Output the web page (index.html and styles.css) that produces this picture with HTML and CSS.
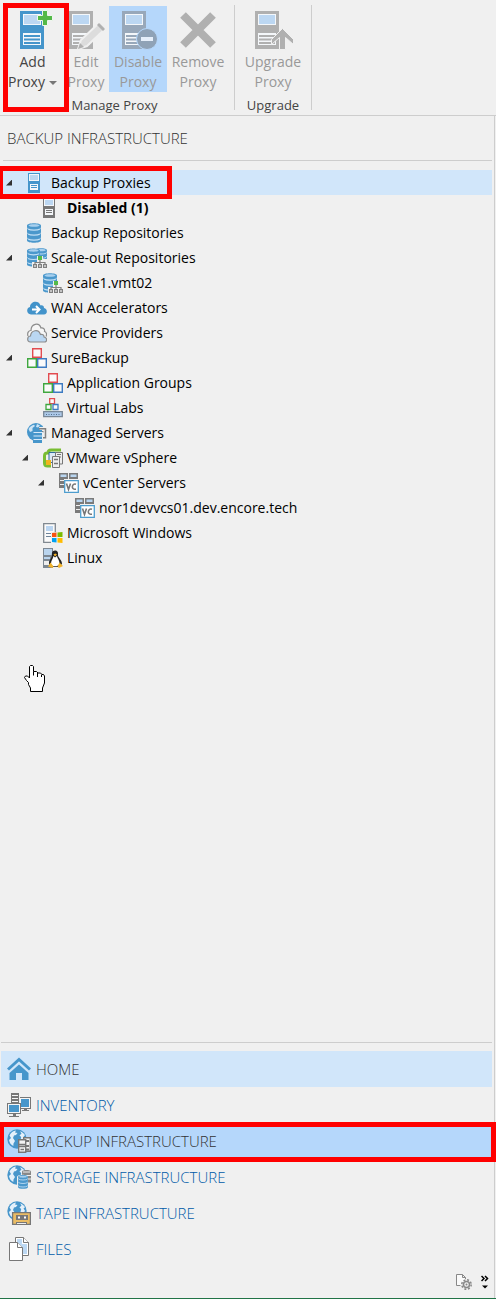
FILE: index.html
```html
<!DOCTYPE html>
<html lang="en">
<head>
<meta charset="utf-8">
<meta name="viewport" content="width=device-width, initial-scale=1">
<title>Backup Infrastructure</title>
<link rel="stylesheet" href="styles.css">
</head>
<body>
<svg class="sprite" aria-hidden="true">
  <symbol id="server-large" viewBox="0 0 24 38">
    <path fill="currentColor" d="M0 0h24v38H0z"/>
    <path class="paper" d="M3 3h18v11H3z"/><path class="screen" d="M4 4h16v9H4z"/>
    <path class="paper" d="M3 22h18v12H3z"/>
    <path stroke="currentColor" stroke-width="2" d="M4 25h16M4 28.500h16M4 32h16"/>
  </symbol>
  <symbol id="server" viewBox="0 0 12 20">
    <path fill="currentColor" d="M0 0h12v20H0z"/>
    <path class="paper" d="M1 1h10v7H1z"/><path class="screen" d="M2 2h8v5H2z"/>
    <path class="paper" d="M2 11h8v6H2z"/>
    <path stroke="currentColor" d="M3 12.500h6M3 14.500h6"/>
  </symbol>
  <symbol id="disks" viewBox="0 0 14 20">
    <path fill="#4b98cc" d="M0 2.500C0-.6 14-.6 14 2.500v2l-.7.700.7.700V9.500l-.7.700.7.700v3.600l-.7.700.7.700v1.600c0 3-14 3-14 0v-1.600l.7-.7-.7-.7v-3.600l.7-.7-.7-.7V5.900l.7-.7-.7-.7z"/>
    <path fill="#a9d0ee" d="M1.500 2.500c0-1.700 11-1.700 11 0s-11 1.700-11 0z"/>
    <path fill="none" stroke="#c3e0f5" stroke-width="1.200" d="M1 6c2.500 1.500 9.500 1.500 12 0M1 11c2.500 1.500 9.500 1.500 12 0M1 16c2.500 1.500 9.500 1.500 12 0"/>
  </symbol>
  <symbol id="nodes" viewBox="0 0 14 12">
    <path fill="none" stroke="#808080" stroke-width="1.200" d="M7 3v5M2 9V6.500h10V9"/>
    <path fill="#54b948" d="M5 0h4v4H5z"/>
    <g fill="#f0f0f0" stroke="#808080" stroke-width="1.200"><path d="M.6 8.600h2.800v2.800H.6zM5.600 8.600h2.800v2.800H5.600zM10.600 8.600h2.800v2.800h-2.800z"/></g>
  </symbol>
  <symbol id="repo" viewBox="0 0 20 20"><use href="#disks" width="14" height="20"/></symbol>
  <symbol id="scaleout" viewBox="0 0 20 20">
    <use href="#disks" x="8" width="12" height="17"/><use href="#disks" width="13" height="19"/>
    <path fill="#f0f0f0" d="M10 8h6v3h4v9H5v-6h5z"/><use href="#nodes" x="6" y="8" width="14" height="12"/>
  </symbol>
  <symbol id="extent" viewBox="0 0 20 20">
    <use href="#disks" width="14" height="20"/>
    <path fill="#f0f0f0" d="M10 8h6v3h4v9H5v-6h5z"/><use href="#nodes" x="6" y="8" width="14" height="12"/>
  </symbol>
  <symbol id="wan" viewBox="0 0 20 20">
    <path fill="#4293ca" d="M4 16.500C-.5 16.500-1.300 10 3 9c0-5.500 8.500-7.500 10.500-1.600 2.500-.4 3.500.8 3.500 2.600 3.800.6 3.800 6.500 0 6.500z"/>
    <path fill="none" stroke="#fff" stroke-width="2" d="M5 11.500h7M9 8l3.500 3.500L9 15"/>
  </symbol>
  <symbol id="providers" viewBox="0 0 20 20">
    <path fill="#f6f6f6" stroke="#8c8c8c" stroke-width="1.200" d="M1 13c-1-3 .5-5.500 3-5.500C4 .5 12-1 14 5c2.500-.3 4 1 3.500 3.500 2 .5 2.500 3 1.500 5"/>
    <path fill="#bad7f2" stroke="#8c8c8c" stroke-width="1.200" d="M3.500 19C-.5 19 0 13 3.500 13c.5-6 8-7.500 10-1.500 2-.6 3.600.5 3.600 2.500 3.400.6 3.200 5 .4 5z"/>
  </symbol>
  <symbol id="cubes" viewBox="0 0 20 20">
    <g fill="#fafafa" stroke-width="1.400"><path stroke="#e24c50" d="M5.700.7h8.600v8.600H5.700z"/><path stroke="#3fa73f" d="M.7 10.700h8.600v8.600H.7z"/><path stroke="#3d7bc2" d="M10.700 10.700h8.600v8.600h-8.600z"/></g>
  </symbol>
  <symbol id="labs" viewBox="0 0 20 20">
    <g fill="#fafafa" stroke-width="1.300"><path stroke="#e24c50" d="M6.700.7h4.800v5H6.700z"/><path stroke="#3fa73f" d="M3 6.500h5v5H3z"/><path stroke="#3d7bc2" d="M10 6.500h5v5h-5z"/></g>
    <path fill="#adc9e8" stroke="#788796" stroke-width="1.300" d="M.7 13.700h18.600v5H.7z"/><path stroke="#536f8c" stroke-dasharray="1 1.500" d="M3 16.500h14"/>
  </symbol>
  <symbol id="globe" viewBox="0 0 20 20">
    <circle cx="10" cy="10" r="9.700" fill="#4796cb"/>
    <path fill="#e4f0fa" d="M2.500 6.500C4 3.500 6 2.200 9 1.600L8 3.500l2.500.5L9 6l-2 .5-1 2.500L8 12l-1.500 2.500-.2 2.500C3.500 15.500 2.500 13.500 2 11l2-2zM13 2.200c2.500.8 4 2.300 5 4L16.500 7.500l1.500 2.300-2.500 3.900-2.100-2.200.8-3.500-1.700-1.500 2-2z"/>
  </symbol>
  <symbol id="managed" viewBox="0 0 20 20">
    <circle cx="9" cy="9" r="9" fill="#4796cb"/>
    <path fill="#cde4f5" d="M1.500 6c1-2 3.500-3.800 5.500-4.200L8 3 5.500 5v3L3 9zM10 1l3 1.500-2 2L9 4z"/>
    <path fill="#f0f0f0" d="M12 4h8v12h-5z"/>
    <path fill="none" stroke="#808080" stroke-width="1.500" d="M12 5.700h6.500v9H16M14 8.700h2.500"/>
    <path fill="#4796cb" d="M6 7h9v13H6z"/>
    <path stroke="#d7eafa" stroke-width="1.200" d="M6.500 9.500H16M6.500 13H16M6.500 16.500H16"/>
  </symbol>
  <symbol id="vsphere" viewBox="0 0 20 20">
    <path fill="none" stroke="#79bd32" stroke-width="3" d="M18 2H8Q5 2 5 5 1.500 4.500 1.500 8v7q0 3 3 3H8"/>
    <path fill="#dce8f4" stroke="#316f9a" d="M6 4.500h8v10H6z"/>
    <path fill="#f2b41c" d="M3 12h5v5H3z"/>
    <path fill="#eee" stroke="#777" d="M12.500 4.500h7V16h-7z"/><path stroke="#777" d="M14 6.500h4M14 9h4"/>
    <path fill="#eee" stroke="#777" d="M9.500 8.500h7v11h-7z"/><path stroke="#777" stroke-width="1.500" d="M11 11.500h4M11 15.500h4"/>
  </symbol>
  <symbol id="vcenter" viewBox="0 0 20 20">
    <path fill="#7a7a7a" d="M0 0h9v6H5v9H0zM10 0h9v6h-9z"/>
    <path fill="#b9d5f0" d="M1.500 1.500h6V4h-6zM11.500 1.500h6V4h-6z"/><path stroke="#eee" d="M1 7.500h4M1 11.500h4"/>
    <path fill="#fff" stroke="#4d9dce" stroke-width="1.300" d="M5.700 7.700h13.600v11.600H5.700z"/>
    <path fill="none" stroke="#777" stroke-width="1.600" d="m7.500 10.500 2 6 2-6M17 11.200c-4-1.500-5 5-1.500 5h1.500"/>
  </symbol>
  <symbol id="windows" viewBox="0 0 20 20">
    <path fill="#fafafa" stroke="#808890" stroke-width="1.300" d="M.7.7h11.600v18.600H.7z"/>
    <path fill="#bad5f1" d="M3 3h7v5H3z"/><path stroke="#6d8298" d="M3 10.500h6M3 13.500h5"/>
    <path fill="#f0f0f0" d="M8 9h12v11H8z"/>
    <path fill="#f65314" d="m9 10 4.500-.5V14H9z"/><path fill="#7cbb00" d="m14.500 9.500 5-.5v5h-5z"/><path fill="#00a1f1" d="M9 15h4.500v4.500L9 19z"/><path fill="#ffbb00" d="M14.500 15h5v5l-5-.5z"/>
  </symbol>
  <symbol id="linux" viewBox="0 0 20 20">
    <path fill="#7c8792" d="M0 0h10v20H0z"/><path fill="#b9d4ee" d="M1 1h8v6H1zM1 9h6v2H1z"/><path fill="#eee" d="M1 13h5v4H1z"/>
    <path fill="#222" d="M12 2.500c-3 0-3.300 3-3 5C8.500 10.500 6 12 6 16l3 3h7l3-3c0-4-3.500-6-4-8.500.3-2.500 0-5-3-5z"/>
    <path fill="#fff" d="M10.500 8 12 9.500 14 8c.5 3 2.500 4 2.500 7.500s-8.500 4-8.500 0c0-3 2-4.500 2.500-7.500z"/>
    <path fill="#f2b32b" d="m10.500 6.500 1.700-1 1.800 1-2 2zM7.500 14.500l3 4-1 1.500L5 18.500zM16.500 14.500l3.500 3.500-4 2-1.500-1.500z"/>
  </symbol>
  <symbol id="home" viewBox="0 0 24 24">
    <path fill="none" stroke="#4796cb" stroke-width="3" d="m1 12.500 11-10 11 10"/>
    <path fill="#4796cb" d="M12 7.500 2.500 16v7H9v-7h6v7h6.500v-7z"/>
  </symbol>
  <symbol id="inventory" viewBox="0 0 24 24">
    <path fill="#777" d="M4 0h8v10H4zM13 4h11v12H13zM17 16h3v1h2v1h-7v-1h2z"/>
    <path stroke="#f5f5f5" d="M5 2.500h6M5 5.500h6M5 8.500h6"/><path fill="#f5f5f5" d="M13 5h10v10H13z"/><path fill="#4796cb" d="M14 6h8v8h-8z"/>
    <path fill="#777" d="M0 10h14v11H0zM6 21h3v2h3v1H2v-1h4z"/><path fill="#f5f5f5" d="M1 11h12v9H1z"/><path fill="#4796cb" d="M2 12h10v7H2z"/>
  </symbol>
  <symbol id="backup" viewBox="0 0 24 24">
    <use href="#globe" width="20" height="20"/>
    <path fill="#f4f4f4" stroke="#777" stroke-width="1.400" d="M16.700 8.700h6.600v13.600h-6.600z"/><path stroke="#777" stroke-width="2" d="M18 12h4M18 17h4M18 20.500h4"/>
    <path fill="#f4f4f4" stroke="#777" stroke-width="1.400" d="M11.700 10.700h7v12.600h-7z"/><path stroke="#777" stroke-width="1.500" d="M12 15.500h6M12 17.500h6M13.500 20.500h3.500"/>
  </symbol>
  <symbol id="storage" viewBox="0 0 24 24">
    <use href="#globe" width="20" height="20"/>
    <path fill="#888" d="M15 6.500c0-2 9-2 9 0v11H15z"/><path stroke="#f0f0f0" stroke-width="1.200" d="M16 7h7M16 10.500h8M16 14h8"/>
    <path fill="#f0f0f0" d="M10 12c0-3 11-3 11 0v12H10z"/><use href="#disks" x="11" y="10" width="10" height="14"/>
  </symbol>
  <symbol id="tape" viewBox="0 0 24 24">
    <use href="#globe" width="20" height="20"/>
    <path fill="#eabc64" stroke="#777" stroke-width="1.300" d="M5.600 11.600h17.800v11.800H5.600z"/><path fill="#777" d="M9 14h12v5H9zM9 21h11v3H9z"/>
    <path fill="#fff" d="M11 15.500h2v2h-2zM17 15.500h2v2h-2z"/><path fill="#eee" d="M10 22h9v1h-9z"/>
  </symbol>
  <symbol id="files" viewBox="0 0 24 24">
    <path fill="#fff" stroke="#777" d="M8.500.5h8l5 5v13h-13z"/><path fill="#bcd8f3" d="M10 2h5v5h5v10H10z"/><path fill="#fff" stroke="#777" d="M16.500.5v5h5"/>
    <path fill="#fff" stroke="#777" d="M2.500 5.500h8l5 5v13h-13z"/><path fill="#fff" stroke="#777" d="M10.500 5.500v5h5"/>
  </symbol>
</svg>

<div class="app">
  <header class="ribbon">
    <section class="group group-manage" aria-label="Manage Proxy">
      <div class="tools">
        <button class="tool tool-add" type="button">
          <svg class="tool-icon" viewBox="0 0 40 40"><use class="blue" href="#server-large" x="7" y="1" width="24" height="38"/><path fill="#54b948" stroke="#eef7ee" d="M29.500.5h5v5h5v5h-5v5h-5v-5h-5v-5h5z"/></svg>
          <span>Add</span><span>Proxy<i class="caret"></i></span>
        </button>
        <button class="tool tool-edit" type="button" disabled>
          <svg class="tool-icon" viewBox="0 0 40 40"><use href="#server-large" x="3" y="1" width="24" height="38"/><path fill="#dcdcdc" stroke="#f0f0f0" stroke-width="2" d="m12 39 3-9 19-18 6 6-19 18z"/><path fill="#b0b0b0" d="m12 39 2-6 4 4zM31 15l2-2 6 6-2 2z"/></svg>
          <span>Edit</span><span>Proxy</span>
        </button>
        <button class="tool tool-disable" type="button" disabled>
          <svg class="tool-icon" viewBox="0 0 40 40"><use href="#server-large" x="4" y="1" width="24" height="38"/><circle cx="29" cy="29" r="10.500" fill="#8fa2b6" stroke="#b5d7fb"/><path fill="#e6effa" d="M23 27h12v4H23z"/></svg>
          <span>Disable</span><span>Proxy</span>
        </button>
        <button class="tool tool-remove" type="button" disabled>
          <svg class="tool-icon" viewBox="0 0 40 40"><path stroke="currentColor" stroke-width="8" d="m5 5 30 30M35 5 5 35"/></svg>
          <span>Remove</span><span>Proxy</span>
        </button>
      </div>
      <h2 class="group-label">Manage Proxy</h2>
      <i class="mark mark-add"></i>
    </section>
    <section class="group group-upgrade" aria-label="Upgrade">
      <div class="tools">
        <button class="tool tool-upgrade" type="button" disabled>
          <svg class="tool-icon" viewBox="0 0 40 40"><use href="#server-large" x="2" y="1" width="24" height="38"/><path fill="#b0b0b0" stroke="#f0f0f0" d="m29.500 18.500 11 11v5l-8-7v12h-6v-12l-8 7v-5z"/></svg>
          <span>Upgrade</span><span>Proxy</span>
        </button>
      </div>
      <h2 class="group-label">Upgrade</h2>
    </section>
  </header>

  <main class="pane">
    <h1 class="title">BACKUP INFRASTRUCTURE</h1>
    <ul class="tree">
      <li>
        <div class="row selected"><button class="toggle" type="button" aria-label="Collapse Backup Proxies"></button><svg class="icon blue" viewBox="0 0 20 20"><use href="#server" x="1" width="12" height="20"/></svg><span>Backup Proxies</span><i class="mark mark-proxies"></i></div>
        <ul><li><div class="row strong"><svg class="icon gray" viewBox="0 0 20 20"><use href="#server" width="12" height="20"/></svg><span>Disabled (1)</span></div></li></ul>
      </li>
      <li><div class="row"><svg class="icon"><use href="#repo"/></svg><span>Backup Repositories</span></div></li>
      <li>
        <div class="row"><button class="toggle" type="button" aria-label="Collapse Scale-out Repositories"></button><svg class="icon"><use href="#scaleout"/></svg><span>Scale-out Repositories</span></div>
        <ul><li><div class="row"><svg class="icon"><use href="#extent"/></svg><span>scale1.vmt02</span></div></li></ul>
      </li>
      <li><div class="row"><svg class="icon"><use href="#wan"/></svg><span>WAN Accelerators</span></div></li>
      <li><div class="row"><svg class="icon"><use href="#providers"/></svg><span>Service Providers</span></div></li>
      <li>
        <div class="row"><button class="toggle" type="button" aria-label="Collapse SureBackup"></button><svg class="icon"><use href="#cubes"/></svg><span>SureBackup</span></div>
        <ul>
          <li><div class="row"><svg class="icon"><use href="#cubes"/></svg><span>Application Groups</span></div></li>
          <li><div class="row"><svg class="icon"><use href="#labs"/></svg><span>Virtual Labs</span></div></li>
        </ul>
      </li>
      <li>
        <div class="row"><button class="toggle" type="button" aria-label="Collapse Managed Servers"></button><svg class="icon"><use href="#managed"/></svg><span>Managed Servers</span></div>
        <ul>
          <li>
            <div class="row"><button class="toggle" type="button" aria-label="Collapse VMware vSphere"></button><svg class="icon"><use href="#vsphere"/></svg><span>VMware vSphere</span></div>
            <ul><li>
              <div class="row"><button class="toggle" type="button" aria-label="Collapse vCenter Servers"></button><svg class="icon"><use href="#vcenter"/></svg><span>vCenter Servers</span></div>
              <ul><li><div class="row"><svg class="icon"><use href="#vcenter"/></svg><span>nor1devvcs01.dev.encore.tech</span></div></li></ul>
            </li></ul>
          </li>
          <li><div class="row"><svg class="icon"><use href="#windows"/></svg><span>Microsoft Windows</span></div></li>
          <li><div class="row"><svg class="icon"><use href="#linux"/></svg><span>Linux</span></div></li>
        </ul>
      </li>
    </ul>

    <nav class="views">
      <a class="view hover" href="#"><svg class="view-icon"><use href="#home"/></svg>HOME</a>
      <a class="view" href="#"><svg class="view-icon"><use href="#inventory"/></svg>INVENTORY</a>
      <a class="view current" href="#" aria-current="page"><svg class="view-icon"><use href="#backup"/></svg>BACKUP INFRASTRUCTURE<i class="mark mark-view"></i></a>
      <a class="view" href="#"><svg class="view-icon"><use href="#storage"/></svg>STORAGE INFRASTRUCTURE</a>
      <a class="view" href="#"><svg class="view-icon"><use href="#tape"/></svg>TAPE INFRASTRUCTURE</a>
      <a class="view" href="#"><svg class="view-icon"><use href="#files"/></svg>FILES</a>
    </nav>
    <footer class="bar">
      <button class="bar-button" type="button" aria-label="View settings"><svg width="16" height="16" viewBox="0 0 16 16"><path fill="#fafafa" stroke="#888" d="M4.500 11.500h-4V.5h6l3 3V5M6.500.5v3h3"/><circle cx="10.500" cy="10.500" r="3" fill="none" stroke="#888" stroke-width="1.500"/><circle cx="10.500" cy="10.500" r="4.700" fill="none" stroke="#888" stroke-width="1.500" stroke-dasharray="2 1.690"/><circle cx="10.500" cy="10.500" r="1" fill="#888"/></svg></button>
      <button class="bar-button" type="button" aria-label="More views"><svg width="8" height="14" viewBox="0 0 8 14"><path fill="none" stroke="#000" stroke-width="1.500" d="m.5 1 2.500 2.500L.5 6M4 1l2.500 2.500L4 6"/><path d="M1 10.500h6L4 13.500z"/></svg></button>
    </footer>
    <svg class="pointer" width="22" height="28" viewBox="0 0 22 28" aria-hidden="true"><path fill="#fff" stroke="#000" d="M5.500 1.500l1-1h2l1 1v5h3l1.500 1.500h2.500L18 9.500h1.500l1 1.500v7l-2 5v3.500h-12V23l-2-3.500v-2l-2-2-2-3 1-1.500h2l2 2zM9.500 6.500v4M13.500 8v4M17.500 9.500V12"/></svg>
  </main>
</div>
</body>
</html>
```
FILE: styles.css
```css
* { box-sizing: border-box; }
body {
  margin: 0;
  background: #f0f0f0;
  color: #000;
  font: 14px/20px "Open Sans", "Noto Sans", sans-serif;
}
h1, h2, ul { margin: 0; padding: 0; font-weight: 400; list-style: none; }
button { border: 0; padding: 0; background: none; font: inherit; color: inherit; }
svg { flex: none; }
.sprite { position: absolute; width: 0; height: 0; }
.blue { color: #4595cb; }
.gray { color: #777; }
.paper { fill: #f4f7fa; }
.screen { fill: #bcd7f2; }

.app {
  display: flex;
  flex-direction: column;
  min-height: 100vh;
  overflow: hidden;
  border-bottom: 1px solid #217346;
}

.ribbon { display: flex; padding: 5px 0; border-bottom: 1px solid #cdcdcd; }
.group {
  position: relative;
  display: flex;
  flex-direction: column;
  border-right: 1px solid #cdcdcd;
}
.group-manage { padding: 0 7px 0 2px; }
.group-upgrade { padding: 0 8px; }
.tools { display: flex; gap: 2px; padding-top: 1px; }
.tool {
  display: flex;
  flex-direction: column;
  align-items: center;
  height: 86px;
  padding-top: 4px;
  color: #444;
  white-space: nowrap;
}
.tool:disabled { color: #999; }
.tool:disabled .tool-icon { color: #b0b0b0; }
.tool:disabled .screen { fill: #dcdcdc; }
.tool-icon { width: 40px; height: 40px; margin-bottom: 2px; }
.tool-add { width: 61px; }
.tool-edit { width: 42px; }
.tool-disable { width: 58px; background: #b5d7fb; }
.tool-disable:disabled .tool-icon { color: #98a8ba; }
.tool-remove { width: 58px; }
.tool-upgrade { width: 60px; }
.caret {
  display: inline-block;
  margin-left: 4px;
  border: 4px solid transparent;
  border-top-color: #777;
  border-bottom: 0;
  vertical-align: middle;
}
.group-label {
  padding-top: 8px;
  color: #444;
  font-size: 13px;
  line-height: 10px;
  text-align: center;
}

.mark { position: absolute; border: 5px solid #f00; pointer-events: none; }
.mark-add { left: 3px; top: -2px; width: 66px; height: 109px; }
.mark-proxies { left: -3px; top: -4px; width: 174px; height: 33px; z-index: 1; }
.mark-view { left: -2px; right: -4px; top: -1px; height: 40px; }

.pane {
  position: relative;
  flex: 1;
  display: flex;
  flex-direction: column;
  margin-right: 1px;
  border-right: 1px solid #cdcdcd;
}
.title {
  margin: 0 2px 9px 3px;
  padding: 12px 4px;
  border-bottom: 1px solid #cdcdcd;
  color: #333;
  font-size: 15px;
  font-weight: 300;
  line-height: 20px;
}
.tree { margin: 0 2px 0 1px; }
.tree ul { padding-left: 16px; }
.row {
  position: relative;
  display: flex;
  align-items: center;
  gap: 4px;
  height: 25px;
  padding-left: 26px;
  white-space: nowrap;
}
.selected { background: #d1e6fa; }
.strong { font-weight: 700; }
.icon { width: 20px; height: 20px; }
.gray .screen, .gray { fill: #777; }
.toggle {
  width: 16px;
  height: 16px;
  margin: 0 6px 0 -26px;
}
.toggle::before {
  content: "";
  display: block;
  width: 6px;
  height: 6px;
  margin: 0 auto;
  background: #333;
  clip-path: polygon(100% 0, 100% 100%, 0 100%);
}

.views {
  margin: auto 2px 0 1px;
  padding-top: 8px;
  border-top: 1px solid #cdcdcd;
}
.view {
  position: relative;
  display: flex;
  align-items: center;
  gap: 5px;
  height: 36px;
  padding-left: 6px;
  color: #005ba8;
  font-size: 15px;
  font-weight: 300;
  text-decoration: none;
}
.view-icon { width: 24px; height: 24px; }
.hover { background: #d1e6fa; color: #333; }
.current { background: #b5d7fb; color: #333; }
.bar {
  display: flex;
  justify-content: flex-end;
  align-items: center;
  gap: 9px;
  height: 31px;
  padding: 0 5px 2px 0;
}
.bar-button { display: flex; }
.pointer { position: absolute; left: 24px; top: 549px; }
```
